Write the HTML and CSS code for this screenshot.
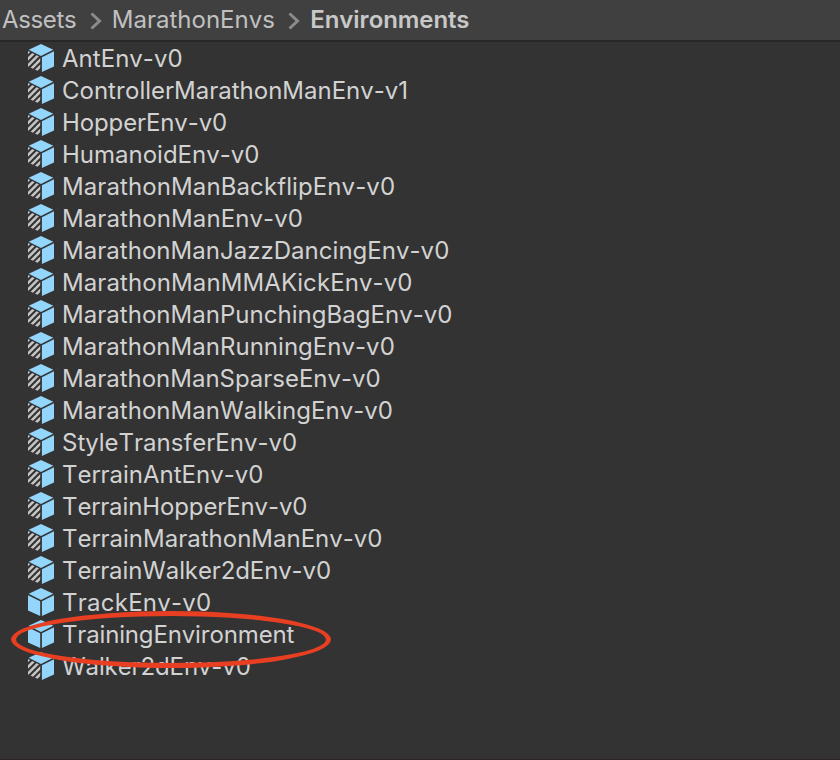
FILE: index.html
```html
<!DOCTYPE html>
<html lang="en">
<head>
<meta charset="utf-8">
<title>Environments</title>
<link rel="stylesheet" href="styles.css">
</head>
<body>
<svg class="defs" aria-hidden="true">
  <defs>
    <clipPath id="left-face"><path d="M0 7.1L12.2 13V28L0 22.4Z"/></clipPath>
    <symbol id="cube" viewBox="0 0 26 28">
      <path class="blue" d="M13 0L25.3 5.7L13 11.9L.7 5.7ZM13.9 13.2L26 7.2V22.4L13.9 28ZM0 7.2L12.2 13.2V28L0 22.4Z"/>
    </symbol>
    <symbol id="variant" viewBox="0 0 26 28">
      <path class="blue" d="M13 0L25.3 5.7L13 11.9L.7 5.7ZM13.9 13.2L26 7.2V22.4L13.9 28Z"/>
      <path class="stripes" clip-path="url(#left-face)" d="M-2 10.5L6 2.5M-2 17L12 3M-2 23.5L16 5.5M-2 30L18 10M4 30.5L18 16.5"/>
    </symbol>
  </defs>
</svg>
<nav class="breadcrumb">
  <span class="assets">Assets</span>
  <svg class="chevron" viewBox="0 0 12 18"><path d="M1.5 1.5L9.5 9L1.5 16.5"/></svg>
  <span class="envs">MarathonEnvs</span>
  <svg class="chevron second" viewBox="0 0 12 18"><path d="M1.5 1.5L9.5 9L1.5 16.5"/></svg>
  <span class="current">Environments</span>
</nav>
<ul class="files">
  <li class="loose"><svg><use href="#variant"/></svg><span>AntEnv-v0</span></li>
  <li><svg><use href="#variant"/></svg><span>ControllerMarathonManEnv-v1</span></li>
  <li class="tight"><svg><use href="#variant"/></svg><span>HopperEnv-v0</span></li>
  <li><svg><use href="#variant"/></svg><span>HumanoidEnv-v0</span></li>
  <li class="wide"><svg><use href="#variant"/></svg><span>MarathonManBackflipEnv-v0</span></li>
  <li class="wide"><svg><use href="#variant"/></svg><span>MarathonManEnv-v0</span></li>
  <li class="loose"><svg><use href="#variant"/></svg><span>MarathonManJazzDancingEnv-v0</span></li>
  <li class="wide"><svg><use href="#variant"/></svg><span>MarathonManMMAKickEnv-v0</span></li>
  <li class="loose"><svg><use href="#variant"/></svg><span>MarathonManPunchingBagEnv-v0</span></li>
  <li class="loose"><svg><use href="#variant"/></svg><span>MarathonManRunningEnv-v0</span></li>
  <li><svg><use href="#variant"/></svg><span>MarathonManSparseEnv-v0</span></li>
  <li class="loose"><svg><use href="#variant"/></svg><span>MarathonManWalkingEnv-v0</span></li>
  <li><svg><use href="#variant"/></svg><span>StyleTransferEnv-v0</span></li>
  <li><svg><use href="#variant"/></svg><span>TerrainAntEnv-v0</span></li>
  <li class="tight"><svg><use href="#variant"/></svg><span>TerrainHopperEnv-v0</span></li>
  <li><svg><use href="#variant"/></svg><span>TerrainMarathonManEnv-v0</span></li>
  <li class="tight"><svg><use href="#variant"/></svg><span>TerrainWalker2dEnv-v0</span></li>
  <li class="wider"><svg><use href="#cube"/></svg><span>TrackEnv-v0</span></li>
  <li class="marked"><svg><use href="#cube"/></svg><span>TrainingEnvironment</span><i class="ring"></i></li>
  <li class="tight"><svg><use href="#variant"/></svg><span>Walker2dEnv-v0</span></li>
</ul>
</body>
</html>
```
FILE: styles.css
```css
* { box-sizing: border-box; }
body {
  margin: 0;
  height: 760px;
  display: flex;
  flex-direction: column;
  background: #333;
  border-bottom: 1px solid #2b2329;
  font: 24px/32px Inter, sans-serif;
  font-kerning: none;
  font-variation-settings: "opsz" 14;
  color: #d2d2d2;
  overflow: hidden;
}
.defs { position: absolute; width: 0; height: 0; }
.blue { fill: #94d5fb; }
.stripes { fill: none; stroke: #c4c4c4; stroke-width: 2.6; }
.breadcrumb {
  flex: none;
  display: flex;
  align-items: center;
  height: 42px;
  padding: 0 0 0 2px;
  background: #404040;
  border-bottom: 2px solid #272727;
  color: #c0c0c0;
}
.assets { letter-spacing: -0.35px; }
.chevron { width: 12px; height: 18px; margin: 1px 10px 0 13.5px; }
.second { margin: 1px 10.5px 0 13px; }
.chevron path { fill: none; stroke: #8c8c8c; stroke-width: 3; }
.current { font-weight: 600; letter-spacing: -0.13px; color: #c8c8c8; }
.files { list-style: none; margin: 0; padding: 0 0 0 28px; }
.files li { display: flex; align-items: center; height: 32px; }
.files span { padding-top: 2px; }
.files svg { flex: none; width: 26px; height: 28px; margin-right: 8px; }
.loose { letter-spacing: 0.03px; }
.wide { letter-spacing: 0.1px; }
.wider { letter-spacing: 0.26px; }
.tight { letter-spacing: -0.11px; }
.marked { position: relative; letter-spacing: -0.16px; }
.ring {
  position: absolute;
  left: -17px;
  top: -7px;
  width: 320px;
  height: 57px;
  border: 5px solid #e83f23;
  border-radius: 50%;
  z-index: 1;
}
```
